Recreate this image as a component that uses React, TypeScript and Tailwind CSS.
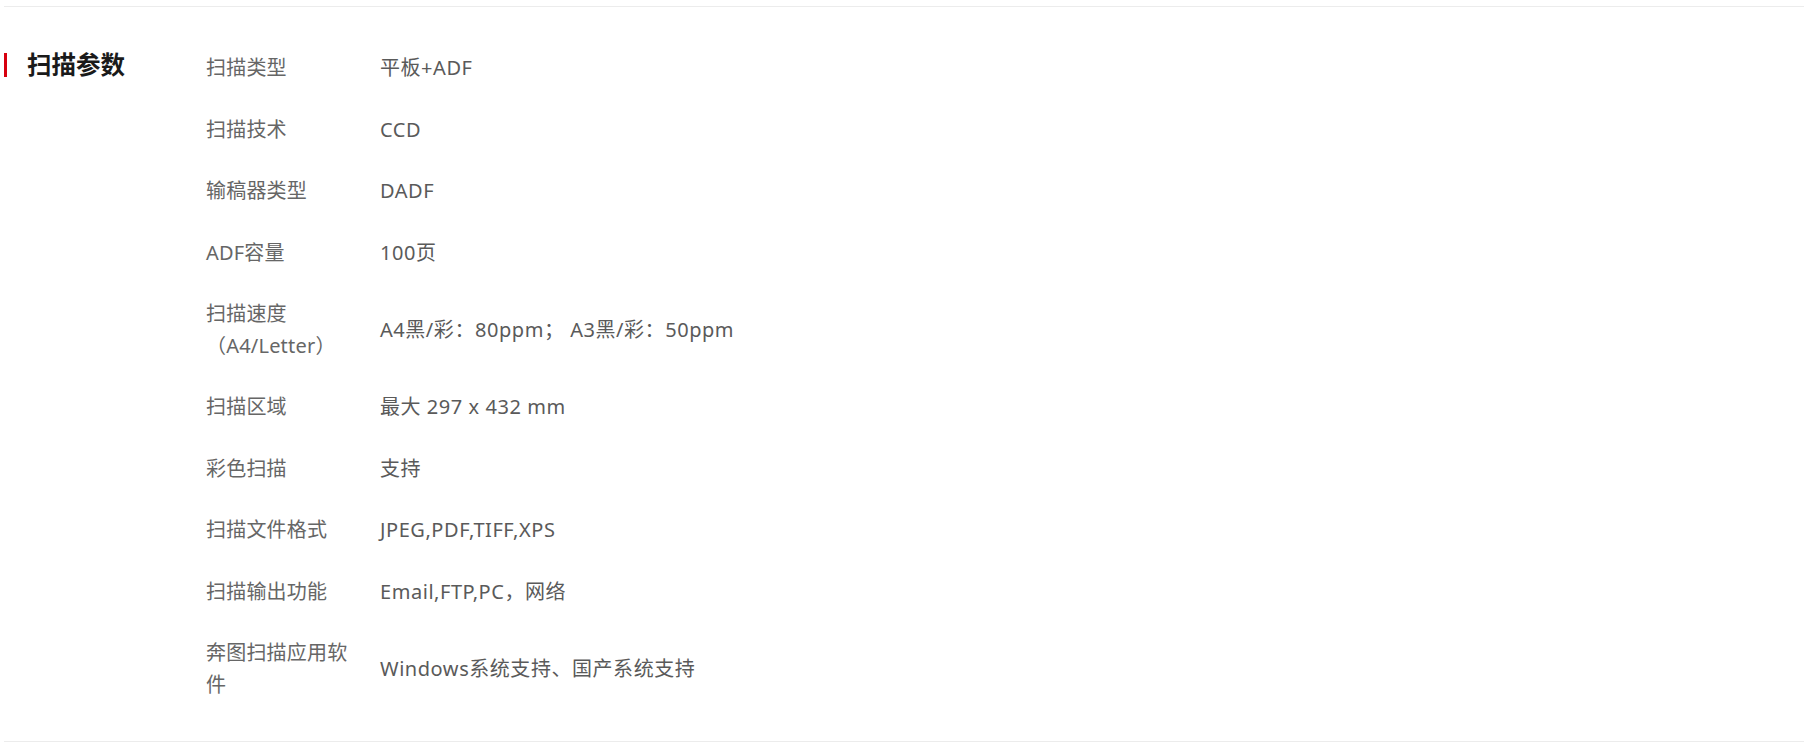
import React from 'react';

const specs: { label: string; value: string }[] = [
  { label: '扫描类型', value: '平板+ADF' },
  { label: '扫描技术', value: 'CCD' },
  { label: '输稿器类型', value: 'DADF' },
  { label: 'ADF容量', value: '100页' },
  { label: '扫描速度（A4/Letter）', value: 'A4黑/彩：80ppm； A3黑/彩：50ppm' },
  { label: '扫描区域', value: '最大 297 x 432 mm' },
  { label: '彩色扫描', value: '支持' },
  { label: '扫描文件格式', value: 'JPEG,PDF,TIFF,XPS' },
  { label: '扫描输出功能', value: 'Email,FTP,PC，网络' },
  { label: '奔图扫描应用软件', value: 'Windows系统支持、国产系统支持' },
];

const App = () => {
  return (
    <div className="min-h-screen bg-white pt-[6px] font-['Noto_Sans','Noto_Sans_CJK_SC',sans-serif]">
      <section className="ml-[4px] w-[1800px] border-y border-[#ececec] pt-[30px] pb-[26px]">
        <div className="flex">
          <div className="w-[202px] shrink-0 pt-[11px]">
            <div className="flex items-center">
              <div className="h-[24px] w-[3px] bg-[#d7000f]"></div>
              <h2 className="ml-[20px] text-[24.5px] leading-[33px] font-bold text-[#1a1a1a]">扫描参数</h2>
            </div>
          </div>

          <div className="flex-1">
            {specs.map((item, i) => (
              <div key={i} className="flex items-center py-[15px] text-[20px] leading-[31.5px] text-[#666]">
                <div className="w-[150px] shrink-0 mr-[24px] tracking-[0.2px]">{item.label}</div>
                <div className="text-[#5a5a5a] tracking-[0.55px]">{item.value}</div>
              </div>
            ))}
          </div>
        </div>
      </section>
    </div>
  );
};

export default App;
